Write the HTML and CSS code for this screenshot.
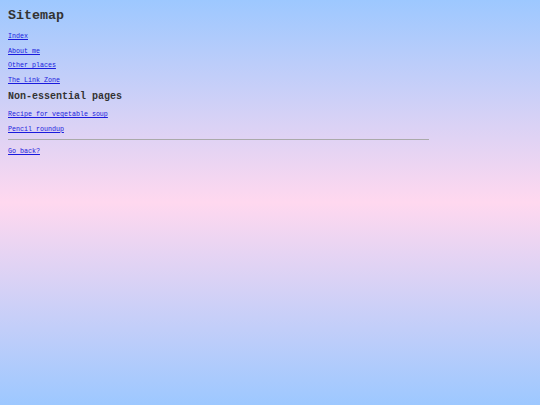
FILE: index.html
```html
<!DOCTYPE html>
<html>
<head>
<meta charset="utf-8">
<title>Sitemap</title>
<link rel="stylesheet" href="styles.css">
</head>
<body>
<main class="page">
  <h1 class="title">Sitemap</h1>
  <p class="item"><a href="#">Index</a></p>
  <p class="item"><a href="#">About me</a></p>
  <p class="item"><a href="#">Other places</a></p>
  <p class="item"><a href="#">The Link Zone</a></p>
  <h2 class="subtitle">Non-essential pages</h2>
  <p class="item"><a href="#">Recipe for vegetable soup</a></p>
  <p class="item"><a href="#">Pencil roundup</a></p>
  <hr class="rule">
  <p class="item"><a href="#">Go back?</a></p>
</main>
</body>
</html>
```
FILE: styles.css
```css
html {
  min-height: 100%;
  background: linear-gradient(to bottom, #9dc8ff 0%, #ffd8ef 50%, #9dc8ff 100%);
}
body {
  margin: 8px;
  font-family: "Liberation Mono", "DejaVu Sans Mono", monospace;
  color: #333;
}
.page {
  width: 421px;
}
.title {
  font-size: 13.33px;
  font-weight: bold;
  margin: 0 0 9px;
  line-height: 15px;
}
.subtitle {
  font-size: 10px;
  font-weight: bold;
  margin: 7px 0 7px;
  line-height: 12px;
}
.item {
  font-size: 6.67px;
  margin: 6.67px 0;
}
.item a {
  color: #1a1add;
}
.rule {
  border: 0;
  border-top: 1px solid #aaa;
  margin: 3px 0 3px;
}
```
